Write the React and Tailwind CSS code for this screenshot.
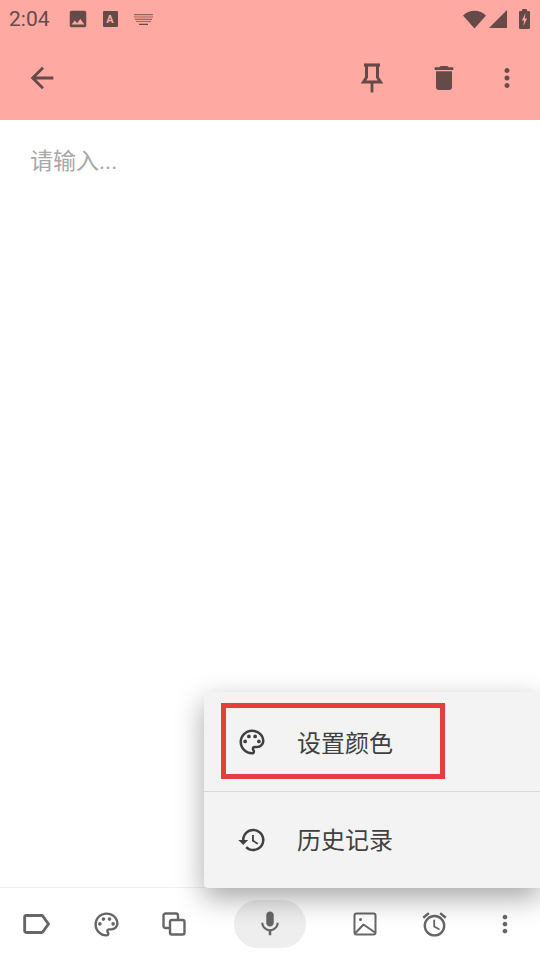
import React from "react";
import { MdArrowBack, MdDelete, MdMoreVert, MdOutlinePalette, MdHistory, MdOutlineLabel, MdOutlineAlarm, MdMic, MdImage } from "react-icons/md";

const CJK = { fontFamily: '"Roboto","Noto Sans CJK SC",sans-serif' };

function Pin({ className }) {
  return (
    <svg viewBox="0 0 24 32" className={className} fill="none" stroke="currentColor">
      <path d="M4 3h16" strokeWidth="3.200" />
      <path d="M6.500 3v13M17.500 3v13" strokeWidth="3" />
      <path d="M6.500 15.500L3.500 20h17l-3-4.500" strokeWidth="3" />
      <path d="M12 20v10.500" strokeWidth="2.800" />
    </svg>
  );
}

function Copy({ className }) {
  return (
    <svg viewBox="0 0 26 26" className={className} fill="none" stroke="currentColor" strokeWidth="2.400" strokeLinejoin="round">
      <path d="M8 17H4.500a2 2 0 0 1-2-2V4.500a2 2 0 0 1 2-2H15a2 2 0 0 1 2 2V8" />
      <rect x="9" y="9" width="14.500" height="14.500" rx="2" />
    </svg>
  );
}

function Picture({ className }) {
  return (
    <svg viewBox="0 0 24 24" className={className} fill="none" stroke="currentColor" strokeWidth="2" strokeLinejoin="round">
      <rect x="1.500" y="1.500" width="21" height="21" rx="2" />
      <circle cx="7.500" cy="7.500" r="1.500" fill="currentColor" stroke="none" />
      <path d="M2 21.500l8.500-9 11.500 8" />
    </svg>
  );
}

function Keyboard({ className }) {
  return (
    <svg viewBox="0 0 19 11" className={className} fill="currentColor">
      <path d="M0 0h19v1.200H0zM0 2.400h19v1.200H0zM1 4.800h17V6H1zM2 7h15v1H2z" opacity=".7" />
      <path d="M5 9.700h9v1.300H5z" />
    </svg>
  );
}

function StatusRight() {
  return (
    <div className="flex items-center text-[#664a47]">
      <svg viewBox="0 0 23 19" className="w-[23px] h-[19px]" fill="currentColor">
        <path d="M11.500 18.500L0 5.500C3 2.500 7 .8 11.500 .8S20 2.500 23 5.500z" />
      </svg>
      <svg viewBox="0 0 18 18" className="w-[18px] h-[18px] ml-[3px]" fill="currentColor">
        <path d="M0 18L18 0v18z" />
      </svg>
      <svg viewBox="0 0 11 20" className="w-[11px] h-[20px] ml-[12px]">
        <path d="M3 2V1a1 1 0 0 1 1-1h3a1 1 0 0 1 1 1v1h2a1 1 0 0 1 1 1v16a1 1 0 0 1-1 1H1a1 1 0 0 1-1-1V3a1 1 0 0 1 1-1z" fill="currentColor" />
        <path d="M6.500 4L3 11.500h2.200L4.300 17 8 9.500H5.700z" fill="#ffa9a3" />
      </svg>
    </div>
  );
}

export default function App() {
  return (
    <div className="relative flex flex-col w-[540px] h-[960px] bg-white overflow-hidden" style={CJK}>
      <div className="flex flex-col h-[120px] bg-[#ffa9a3] shrink-0">
        <div className="flex items-center justify-between h-[38px] pl-[9px] pr-[10px] text-[#664a47]">
          <div className="flex items-center">
            <span className="text-[21px] leading-none" style={{ fontFamily: "Roboto, sans-serif" }}>2:04</span>
            <MdImage className="w-[22px] h-[22px] ml-[17px]" />
            <div className="relative flex items-center justify-center w-[15px] h-[16px] ml-[14px] bg-[#664a47] rounded-[1px] text-[#ffa9a3] text-[11px] font-bold leading-none">A</div>
            <Keyboard className="w-[19px] h-[11px] ml-[16px]" />
          </div>
          <StatusRight />
        </div>
        <div className="flex items-center flex-1 text-[#664a47] pb-[2px]">
          <MdArrowBack className="w-[34px] h-[34px] ml-[25px]" />
          <Pin className="w-[24px] h-[32px] ml-[301px]" />
          <MdDelete className="w-[32px] h-[32px] ml-[44px]" />
          <MdMoreVert className="w-[30px] h-[30px] ml-[32px]" />
        </div>
      </div>

      <div className="flex-1 px-[30px] pt-[26px]">
        <div className="text-[23px] leading-[32px] text-[#a8a8a8]">请输入...</div>
      </div>

      <div className="flex items-center h-[73px] shrink-0 border-t border-[#f1f1f1] text-[#666666]">
        <MdOutlineLabel className="w-[34px] h-[34px] ml-[19px]" />
        <MdOutlinePalette className="w-[29px] h-[29px] ml-[39px]" />
        <Copy className="w-[26px] h-[26px] ml-[40px]" />
        <div className="flex items-center justify-center w-[72px] h-[48px] ml-[47px] rounded-full bg-[#eeeeee]">
          <MdMic className="w-[30px] h-[30px]" />
        </div>
        <Picture className="w-[24px] h-[24px] ml-[47px]" />
        <MdOutlineAlarm className="w-[29px] h-[29px] ml-[43px]" />
        <MdMoreVert className="w-[28px] h-[28px] ml-[42px]" />
      </div>

      <div className="absolute left-[204px] right-0 top-[692px] h-[196px] flex flex-col bg-[#f3f3f3] rounded-bl-[4px] shadow-[0_10px_28px_rgba(0,0,0,0.35)] text-[#404040]">
        <div className="flex items-center h-[100px] border-b border-[#d9d9d9]">
          <MdOutlinePalette className="w-[30px] h-[30px] ml-[33px]" />
          <span className="ml-[30px] text-[24px] leading-none pt-[4px]">设置颜色</span>
        </div>
        <div className="flex items-center flex-1">
          <MdHistory className="w-[30px] h-[30px] ml-[33px]" />
          <span className="ml-[30px] text-[24px] leading-none pt-[2px]">历史记录</span>
        </div>
        <div className="absolute left-[17px] top-[11px] w-[224px] h-[76px] border-[5px] border-[#e53e3e]" />
      </div>
    </div>
  );
}
